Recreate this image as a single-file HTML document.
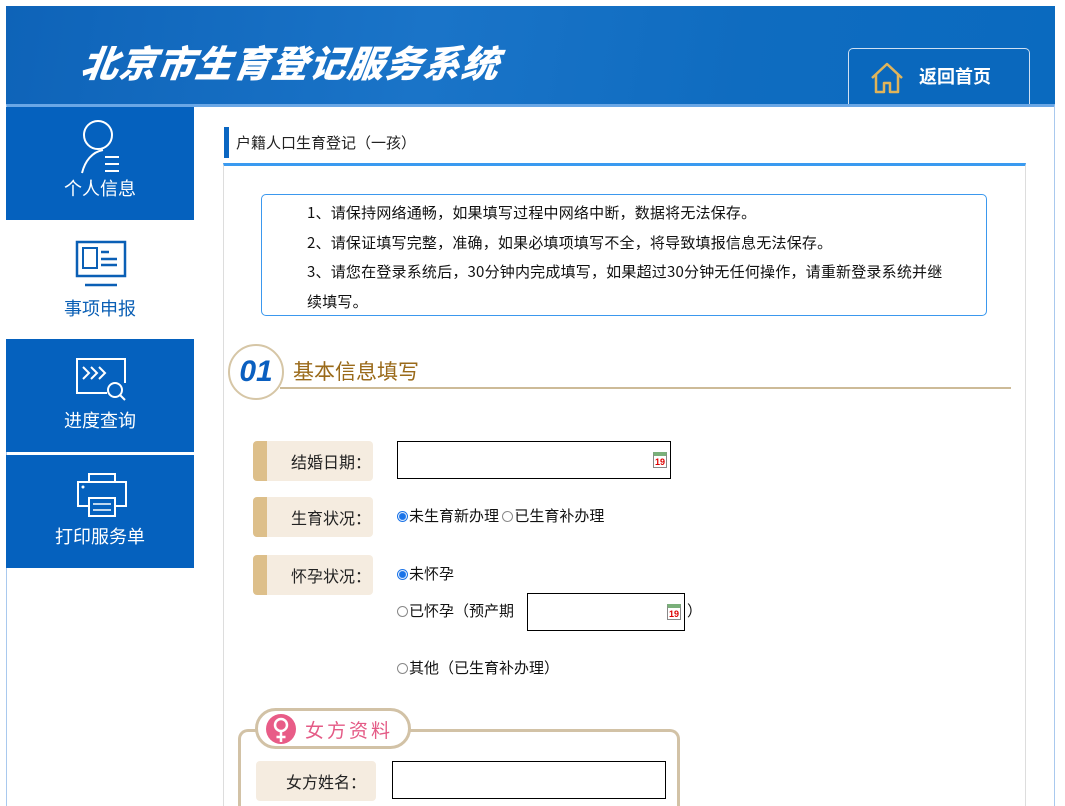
<!DOCTYPE html>
<html><head><meta charset="utf-8"><style>
*{margin:0;padding:0;box-sizing:border-box}
html,body{width:1065px;height:806px;overflow:hidden}
body{background:#fff;font-family:"Noto Sans CJK SC","Liberation Sans",sans-serif;position:relative;color:#222}
.hdr{position:absolute;left:6px;top:6px;width:1049px;height:99px;background:linear-gradient(100deg,#0e63b8 0%,#1a74c8 40%,#0f6cc0 70%,#0a6abf 100%)}
.title{position:absolute;left:76px;top:30px;font-size:37px;font-weight:900;font-style:italic;color:#fff;letter-spacing:1px;transform:skewX(-8deg);line-height:50px}
.home{position:absolute;left:848px;top:48px;width:182px;height:58px;border:1px solid #cfe0f3;border-bottom:none;border-radius:5px 5px 0 0;background:#0a68bd}
.home span{position:absolute;left:70px;top:14px;color:#fff;font-weight:bold;font-size:18px}
.main{position:absolute;left:6px;top:104px;width:1049px;height:702px;border:1px solid #a9c9ee;border-bottom:none;border-top:3px solid #6aa7e6;background:#fff}
.nav{position:absolute;left:6px;width:188px;height:113px;background:#0561be;color:#fff;text-align:center;font-size:18px}
.nav.w{background:#fff;color:#0a5fb5}
.nav svg{position:absolute;left:69px;top:12px}
.nav b{position:absolute;left:0;right:0;top:68px;font-weight:normal}
.cbox{position:absolute;left:223px;top:163px;width:803px;height:643px;border-left:1px solid #ddd;border-right:1px solid #ddd;border-top:3px solid #3a9af0}
.crumb{position:absolute;left:224px;top:127px;height:31px;border-left:5px solid #0a66c2;padding-left:7px;font-size:15px;line-height:32px;color:#222}
.note{position:absolute;left:261px;top:194px;width:726px;height:122px;border:1px solid #3b98ee;border-radius:5px;padding:3px 0 0 45px;font-size:15px;line-height:29.5px;color:#111;letter-spacing:0.2px}
.sec{position:absolute;left:228px;top:344px;width:56px;height:56px;border:2px solid #d6c6a6;border-radius:50%;background:#fff;color:#0a5fc0;font-weight:bold;font-style:italic;font-size:30px;text-align:center;line-height:52px;font-family:"Liberation Sans",sans-serif}
.secl{position:absolute;left:280px;top:387px;width:731px;height:2px;background:#cdbb98}
.sect{position:absolute;left:293px;top:356px;font-size:21px;color:#9a6a1a}
.lab{position:absolute;left:253px;width:120px;height:40px;background:#f5ece0;border-left:14px solid #ddbf8a;border-radius:4px;text-align:right;padding-right:2px;font-size:16px;line-height:40px;color:#222}
.inp{position:absolute;border:1px solid #000;background:#fff}
.cal{position:absolute;right:3px;top:10px;width:14px;height:16px;border:1px solid #888;background:#fff;font-size:9px;color:#d00;font-weight:bold;text-align:center;line-height:12px;border-top:4px solid #7ab07a;font-family:"Liberation Sans",sans-serif}
.t{position:absolute;font-size:15px;color:#111;line-height:20px}
.rad{display:inline-block;width:11px;height:11px;border:1px solid #888;border-radius:50%;vertical-align:-1px;margin-right:1px;background:#fff}
.rad.on{border-color:#1a73e8;background:radial-gradient(circle,#1a73e8 3px,#fff 4px)}
.fbox{position:absolute;left:238px;top:729px;width:442px;height:77px;border:3px solid #d2c2a6;border-bottom:none;border-radius:10px 10px 0 0}
.ftag{position:absolute;left:255px;top:708px;width:156px;height:41px;border:3px solid #d2c2a6;border-radius:22px;background:#fff}
.ftag span{position:absolute;left:47px;top:5px;color:#e45b86;font-size:19px;letter-spacing:3px}
.ficon{position:absolute;left:8px;top:3px;width:30px;height:30px;border-radius:50%;background:#e85c87}
</style></head><body>
<div class="hdr"><div class="title">北京市生育登记服务系统</div></div>
<div class="home"><svg style="position:absolute;left:20px;top:12px" width="36" height="34" viewBox="0 0 36 34"><path d="M3 17 L18 3 L33 17 M7 14 V31 H15 V22 H21 V31 H29 V14" fill="none" stroke="#e0b45a" stroke-width="2.5" stroke-linejoin="round"/></svg><span>返回首页</span></div>
<div class="main"></div>
<div class="nav" style="top:107px"><svg width="50" height="56" viewBox="0 0 50 56"><circle cx="23" cy="16" r="14" fill="none" stroke="#fff" stroke-width="2"/><path d="M7 54 C10 42 17 33 28 31" fill="none" stroke="#fff" stroke-width="2"/><path d="M30 38H44M30 45H44M30 52H44" stroke="#fff" stroke-width="2"/></svg><b>个人信息</b></div>
<div class="nav w" style="top:220px;height:119px"><svg width="52" height="50" viewBox="0 0 52 50" style="top:20px"><rect x="2" y="2" width="48" height="34" fill="none" stroke="#0a5fb5" stroke-width="2.5"/><rect x="8" y="8" width="14" height="20" fill="none" stroke="#0a5fb5" stroke-width="2"/><path d="M26 12H34M26 19H42M26 25H42M10 45H42" stroke="#0a5fb5" stroke-width="2.5"/></svg><b style="top:75px">事项申报</b></div>
<div class="nav" style="top:339px"><svg width="52" height="50" viewBox="0 0 52 50" style="top:18px"><path d="M32 36H2V2H50V26" fill="none" stroke="#fff" stroke-width="2"/><path d="M8 10L14 16L8 22M16 10L22 16L16 22M24 10L30 16L24 22" fill="none" stroke="#fff" stroke-width="2"/><circle cx="40" cy="33" r="7" fill="none" stroke="#fff" stroke-width="2"/><path d="M45 38L50 43" stroke="#fff" stroke-width="2"/></svg><b>进度查询</b></div>
<div class="nav" style="top:455px"><svg width="54" height="46" viewBox="0 0 54 46" style="top:17px"><path d="M14 10V2H40V10" fill="none" stroke="#fff" stroke-width="2"/><path d="M14 34H3V10H51V34H40" fill="none" stroke="#fff" stroke-width="2"/><rect x="14" y="26" width="26" height="18" fill="none" stroke="#fff" stroke-width="2"/><circle cx="8" cy="15" r="1.5" fill="#fff"/><path d="M18 32H36M18 38H36" stroke="#fff" stroke-width="1.5"/></svg><b>打印服务单</b></div>
<div class="cbox"></div>
<div class="crumb">户籍人口生育登记（一孩）</div>
<div class="note">1、请保持网络通畅，如果填写过程中网络中断，数据将无法保存。<br>2、请保证填写完整，准确，如果必填项填写不全，将导致填报信息无法保存。<br>3、请您在登录系统后，30分钟内完成填写，如果超过30分钟无任何操作，请重新登录系统并继<br>续填写。</div>
<div class="secl"></div>
<div class="sec">01</div>
<div class="sect">基本信息填写</div>
<div class="lab" style="top:441px">结婚日期：</div>
<div class="inp" style="left:397px;top:441px;width:274px;height:38px"><div class="cal">19</div></div>
<div class="lab" style="top:497px">生育状况：</div>
<div class="t" style="left:397px;top:506px"><span class="rad on"></span>未生育新办理 <span class="rad"></span>已生育补办理</div>
<div class="lab" style="top:555px">怀孕状况：</div>
<div class="t" style="left:397px;top:564px"><span class="rad on"></span>未怀孕</div>
<div class="t" style="left:397px;top:601px"><span class="rad"></span>已怀孕（预产期</div>
<div class="inp" style="left:527px;top:593px;width:158px;height:38px"><div class="cal">19</div></div>
<div class="t" style="left:687px;top:601px">）</div>
<div class="t" style="left:397px;top:658px"><span class="rad"></span>其他（已生育补办理）</div>
<div class="fbox"></div>
<div class="ftag"><div class="ficon"><svg width="30" height="30" viewBox="0 0 30 30"><circle cx="15" cy="11" r="6" fill="none" stroke="#fff" stroke-width="2.5"/><path d="M15 17V28M10.5 23H19.5" stroke="#fff" stroke-width="2.5"/></svg></div><span>女方资料</span></div>
<div class="lab" style="left:256px;top:761px;border-left:none;width:120px;padding-right:10px">女方姓名：</div>
<div class="inp" style="left:392px;top:761px;width:274px;height:38px"></div>
</body></html>
